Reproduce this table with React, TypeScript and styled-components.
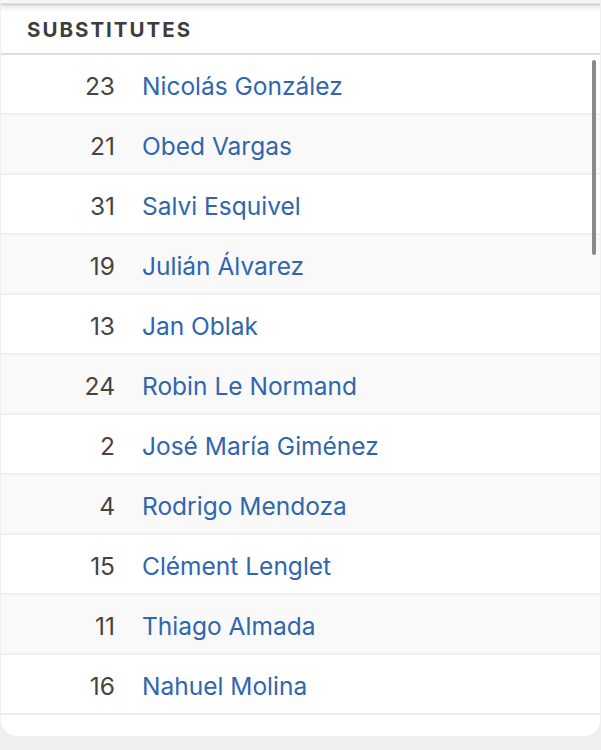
import React from 'react';
import styled, { createGlobalStyle } from "styled-components";

const players = [
    { num: 23, name: "Nicolás González" },
    { num: 21, name: "Obed Vargas" },
    { num: 31, name: "Salvi Esquivel" },
    { num: 19, name: "Julián Álvarez" },
    { num: 13, name: "Jan Oblak" },
    { num: 24, name: "Robin Le Normand" },
    { num: 2, name: "José María Giménez" },
    { num: 4, name: "Rodrigo Mendoza" },
    { num: 15, name: "Clément Lenglet" },
    { num: 11, name: "Thiago Almada" },
    { num: 16, name: "Nahuel Molina" },
];

const GlobalStyle = createGlobalStyle`
    body {
        margin: 0;
        background: #eeeff1;
        font-family: Inter, "Noto Sans", "Liberation Sans", sans-serif;
    }
`

export default function App() {
    return (
        <Page>
            <GlobalStyle />
            <Card>
                <TopShade />
                <Header>Substitutes</Header>
                <List>
                    {players.map((p, i) => (
                        <Row key={p.num} striped={i % 2 === 1}>
                            <Num>{p.num}</Num>
                            <Name>{p.name}</Name>
                        </Row>
                    ))}
                    <Scrollbar />
                </List>
                <Footer />
            </Card>
        </Page>
    );
}

type RowProps = {
    striped: boolean;
};

const Page = styled.div`
    width: 601px;
    height: 750px;
    overflow: hidden;
    background: #eeeff1;
`

const Card = styled.div`
    background: #fff;
    border-radius: 0 0 16px 16px;
    margin: 0 1px;
`

const TopShade = styled.div`
    height: 12px;
    margin-bottom: -8px;
    background: linear-gradient(#f6f6f6 0, #f6f6f6 3px, #c9c9c9 4px, #ececec 6px, #fff 12px);
`

const Header = styled.div`
    height: 47px;
    padding-top: 2px;
    display: flex;
    align-items: center;
    padding-left: 26px;
    font-size: 20.5px;
    font-weight: 700;
    letter-spacing: 2px;
    text-transform: uppercase;
    color: #3d3d3d;
    border-bottom: 2px solid #dcdcdc;
`

const List = styled.div`
    position: relative;
`

const Row = styled.div<RowProps>`
    height: 54px;
    padding-top: 4px;
    display: flex;
    align-items: center;
    font-size: 24.5px;
    background: ${(props) => (props.striped ? "#f9f9f9" : "#fff")};
    border-bottom: 2px solid #efefef;
`

const Num = styled.span`
    width: 114px;
    text-align: right;
    color: #444;
`

const Name = styled.span`
    margin-left: 27px;
    color: #3066b0;
`

const Scrollbar = styled.div`
    position: absolute;
    right: 4px;
    top: 5px;
    width: 4px;
    height: 195px;
    border-radius: 2px;
    background: #8a8a8a;
`

const Footer = styled.div`
    height: 21px;
`
